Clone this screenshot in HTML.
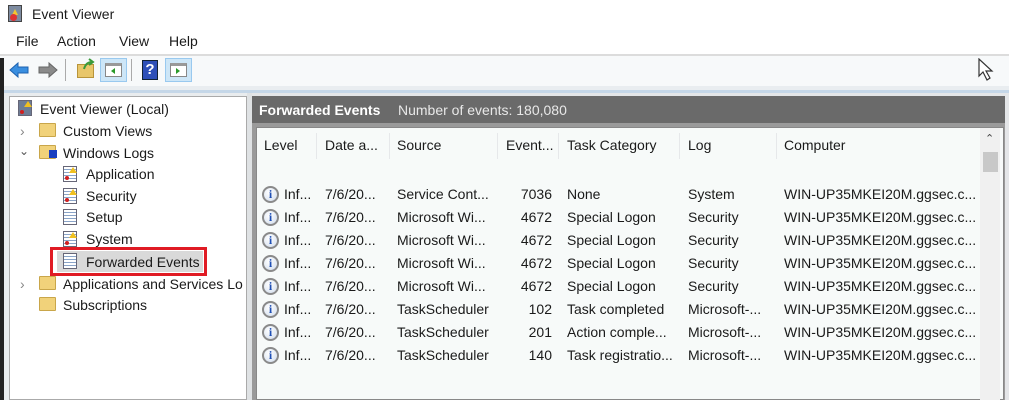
<!DOCTYPE html>
<html><head><style>
*{margin:0;padding:0;box-sizing:border-box}
body{width:1009px;height:400px;overflow:hidden;background:#f5f7f8;font-family:"Liberation Sans",sans-serif;font-size:14px;color:#1a1a1a;position:relative}
.a{position:absolute;white-space:nowrap}
.t{font-size:14px;line-height:16px}
.ico{position:absolute;width:14px;height:16px;border:1px solid #667;background:repeating-linear-gradient(#fff 0 2px,#8aa4c8 2px 3px)}
.warn:after{content:"";position:absolute;left:5px;top:0;border:4px solid transparent;border-bottom:6px solid #f0c020;border-top:0}
.warn:before{content:"";position:absolute;left:1px;top:9px;width:4px;height:4px;border-radius:50%;background:#d02020}
.fold{position:absolute;width:17px;height:14px;background:#f1d27a;border:1px solid #c9a64a;border-radius:1px}
.info{position:absolute;width:17px;height:17px;border-radius:50%;border:2px solid #8a8a8a;background:radial-gradient(circle at 40% 35%,#fff,#d0dcec);color:#1e4fb4;font-weight:bold;font-size:12px;line-height:13px;text-align:center;font-family:"Liberation Serif",serif}
.sep{position:absolute;top:133px;width:1px;height:26px;background:#e6e8ea}
</style></head><body>
<div class="a" style="left:0;top:0;width:1009px;height:28px;background:#fff"></div>
<div class="a" style="left:8px;top:5px;width:14px;height:17px;background:#7d8ba0;border:1px solid #444"></div>
<div class="a" style="left:12px;top:6px;border:3px solid transparent;border-bottom:6px solid #f3c530"></div>
<div class="a" style="left:10px;top:14px;width:7px;height:7px;border-radius:50%;background:#d33"></div>
<div class="a t" style="left:32px;top:6px">Event Viewer</div>
<div class="a" style="left:0;top:28px;width:1009px;height:26px;background:#fff"></div>
<div class="a t" style="left:16px;top:33px">File</div>
<div class="a t" style="left:57px;top:33px">Action</div>
<div class="a t" style="left:119px;top:33px">View</div>
<div class="a t" style="left:169px;top:33px">Help</div>
<div class="a" style="left:0;top:54px;width:1009px;height:2px;background:#dcdcdc"></div>
<div class="a" style="left:0;top:56px;width:1009px;height:30px;background:#f7f9fa"></div>
<div class="a" style="left:0;top:58px;width:4px;height:342px;background:#222"></div>
<svg class="a" style="left:9px;top:61px" width="50" height="18"><path d="M1 9 L9 2 V6 H19 V12 H9 V16 Z" fill="#3a8fe0" stroke="#1d62b0"/><path d="M48 9 L40 2 V6 H30 V12 H40 V16 Z" fill="#8a8a8a" stroke="#666"/></svg>
<div class="a" style="left:65px;top:59px;width:1px;height:22px;background:#aaa"></div>
<div class="a" style="left:77px;top:64px;width:17px;height:14px;background:#e8c66a;border:1px solid #b8943a"></div>
<svg class="a" style="left:82px;top:58px" width="14" height="12"><path d="M2 11 Q4 4 10 4 M7 1 L11 4 L7 7" fill="none" stroke="#3a9a3a" stroke-width="2"/></svg>
<div class="a" style="left:100px;top:58px;width:27px;height:24px;background:#cde6f7;border:1px solid #99c9ef"></div>
<div class="a" style="left:105px;top:63px;width:17px;height:14px;background:#fff;border:1px solid #888;border-top:3px solid #999"></div>
<div class="a" style="left:111px;top:68px;border:3px solid transparent;border-right:4px solid #2a9a2a;border-left:0"></div>
<div class="a" style="left:131px;top:59px;width:1px;height:22px;background:#aaa"></div>
<div class="a" style="left:142px;top:60px;width:16px;height:20px;background:#2d4fb8;border:1px solid #123;color:#fff;font-weight:bold;font-size:15px;text-align:center;line-height:18px">?</div>
<div class="a" style="left:165px;top:58px;width:27px;height:24px;background:#cde6f7;border:1px solid #99c9ef"></div>
<div class="a" style="left:170px;top:63px;width:17px;height:14px;background:#fff;border:1px solid #888;border-top:3px solid #999"></div>
<div class="a" style="left:176px;top:68px;border:3px solid transparent;border-left:4px solid #2a9a2a;border-right:0"></div>
<svg class="a" style="left:978px;top:58px" width="16" height="24"><path d="M1 1 V18 L5 14 L9 22 L12 20 L8 13 H14 Z" fill="#fff" stroke="#333" stroke-width="1.2"/></svg>
<div class="a" style="left:4px;top:86px;width:1005px;height:6px;background:#e9edf0"></div>
<div class="a" style="left:4px;top:90px;width:1005px;height:3px;background:#c5d7e8"></div>
<div class="a" style="left:4px;top:93px;width:244px;height:307px;background:#e9ecee"></div>
<div class="a" style="left:9px;top:96px;width:238px;height:304px;background:#fff;border:1px solid #aaa"></div>
<div class="a" style="left:247px;top:93px;width:5px;height:307px;background:#dfe2e4"></div>
<div class="ico warn" style="left:18px;top:100px;background:#6e7d96"></div>
<div class="a t" style="left:40px;top:101px">Event Viewer (Local)</div>
<div class="a t" style="left:20px;top:123px;color:#888">›</div>
<div class="fold" style="left:39px;top:123px"></div>
<div class="a t" style="left:63px;top:123px">Custom Views</div>
<div class="a t" style="left:19px;top:143px;color:#555;font-size:12px">⌄</div>
<div class="fold" style="left:39px;top:145px"></div>
<div class="a" style="left:49px;top:150px;width:8px;height:8px;background:#1a3fc0"></div>
<div class="a t" style="left:63px;top:145px">Windows Logs</div>
<div class="ico warn" style="left:63px;top:166px"></div><div class="a t" style="left:86px;top:166px">Application</div>
<div class="ico warn" style="left:63px;top:188px"></div><div class="a t" style="left:86px;top:188px">Security</div>
<div class="ico" style="left:63px;top:209px"></div><div class="a t" style="left:86px;top:209px">Setup</div>
<div class="ico warn" style="left:63px;top:231px"></div><div class="a t" style="left:86px;top:231px">System</div>
<div class="a" style="left:50px;top:247px;width:157px;height:29px;border:3px solid #e01b24"></div>
<div class="a" style="left:57px;top:251px;width:146px;height:21px;background:#d9d9d9"></div>
<div class="ico" style="left:63px;top:253px"></div><div class="a t" style="left:86px;top:254px">Forwarded Events</div>
<div class="a t" style="left:20px;top:276px;color:#888">›</div>
<div class="fold" style="left:39px;top:276px"></div>
<div class="a t" style="left:63px;top:276px">Applications and Services Lo</div>
<div class="fold" style="left:39px;top:297px"></div>
<div class="a t" style="left:63px;top:297px">Subscriptions</div>
<div class="a" style="left:252px;top:93px;width:757px;height:307px;background:#e4e6e8"></div>
<div class="a" style="left:252px;top:96px;width:753px;height:27px;background:#6a6a6a"></div>
<div class="a t" style="left:259px;top:102px;color:#fff;font-weight:bold">Forwarded Events</div>
<div class="a t" style="left:398px;top:102px;color:#e8e8e8">Number of events: 180,080</div>
<div class="a" style="left:252px;top:123px;width:753px;height:277px;background:#9a9a9a"></div>
<div class="a" style="left:256px;top:127px;width:748px;height:273px;background:#f7faf9;border:1px solid #888"></div>
<div class="a" style="left:980px;top:128px;width:20px;height:272px;background:#f0f0f0"></div>
<div class="a" style="left:983px;top:152px;width:15px;height:20px;background:#c8c8c8"></div>
<div class="a" style="left:985px;top:132px;font-size:11px;color:#444">⌃</div>
<div class="sep" style="left:316px"></div><div class="sep" style="left:389px"></div><div class="sep" style="left:497px"></div><div class="sep" style="left:558px"></div><div class="sep" style="left:679px"></div><div class="sep" style="left:776px"></div>
<div class="a t" style="left:264px;top:137px">Level</div>
<div class="a t" style="left:325px;top:137px">Date a...</div>
<div class="a t" style="left:397px;top:137px">Source</div>
<div class="a t" style="left:506px;top:137px">Event...</div>
<div class="a t" style="left:567px;top:137px">Task Category</div>
<div class="a t" style="left:688px;top:137px">Log</div>
<div class="a t" style="left:784px;top:137px">Computer</div>
<div id="rows"></div>
<script>
var d=[["Service Cont...","7036","None","System"],["Microsoft Wi...","4672","Special Logon","Security"],["Microsoft Wi...","4672","Special Logon","Security"],["Microsoft Wi...","4672","Special Logon","Security"],["Microsoft Wi...","4672","Special Logon","Security"],["TaskScheduler","102","Task completed","Microsoft-..."],["TaskScheduler","201","Action comple...","Microsoft-..."],["TaskScheduler","140","Task registratio...","Microsoft-..."]];
var h="";d.forEach(function(r,i){var y=186+i*23;
h+='<div class="info" style="left:262px;top:'+(y)+'px">i</div><div class="a t" style="left:284px;top:'+y+'px">Inf...</div><div class="a t" style="left:325px;top:'+y+'px">7/6/20...</div><div class="a t" style="left:397px;top:'+y+'px">'+r[0]+'</div><div class="a t" style="left:506px;top:'+y+'px;width:46px;text-align:right">'+r[1]+'</div><div class="a t" style="left:567px;top:'+y+'px">'+r[2]+'</div><div class="a t" style="left:688px;top:'+y+'px">'+r[3]+'</div><div class="a t" style="left:784px;top:'+y+'px">WIN-UP35MKEI20M.ggsec.c...</div>';});
document.getElementById("rows").innerHTML=h;
</script>
</body></html>
